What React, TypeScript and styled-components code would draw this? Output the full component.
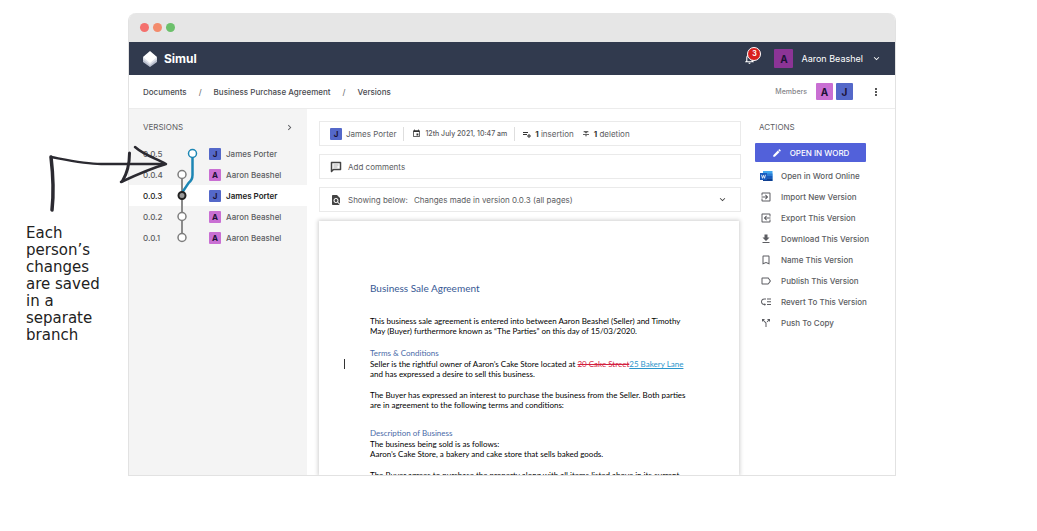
import React from 'react';
import styled, { createGlobalStyle, css } from 'styled-components';
import {
  MdBookmarkBorder,
  MdCallSplit,
  MdChevronRight,
  MdEdit,
  MdEvent,
  MdExitToApp,
  MdExpandMore,
  MdFileDownload,
  MdFindInPage,
  MdFormatStrikethrough,
  MdLabelOutline,
  MdLowPriority,
  MdMoreVert,
  MdNotificationsNone,
} from 'react-icons/md';

const GlobalStyle = createGlobalStyle`
  *, *::before, *::after { box-sizing: border-box; }
  body {
    margin: 0;
    background: #fff;
    color: #5c5d62;
    font-family: Inter, "Open Sans", sans-serif;
    font-size: 8px;
    line-height: 12px;
  }
  button { font: inherit; color: inherit; background: none; border: 0; padding: 0; cursor: pointer; }
  a { color: inherit; text-decoration: none; }
  ul, ol { list-style: none; margin: 0; padding: 0; }
  h1, h2, h3, p { margin: 0; font: inherit; }
  svg { display: block; flex: none; }
`;

const Page = styled.div`
  display: grid;
  grid-template-columns: 128px minmax(0, 1fr);
  height: 100vh;
  padding: 13px 141px 55px 0;
`;

const Note = styled.aside`
  position: relative;
  z-index: 2;
  padding: 212px 10px 0 26px;
  color: #222;
  font-family: "DejaVu Sans", sans-serif;
  font-size: 15px;
  line-height: 17px;
`;

const NoteArrow = styled.svg`
  position: absolute;
  top: 127px;
  left: 40px;
  pointer-events: none;
`;

const Window = styled.div`
  display: flex;
  flex-direction: column;
  min-height: 0;
  border: 1px solid #e2e2e2;
  border-top: 0;
  border-radius: 8px 8px 0 0;
  overflow: hidden;
`;

const TitleBar = styled.div`
  display: flex;
  align-items: center;
  gap: 4px;
  flex: none;
  height: 29px;
  padding-left: 11px;
  background: #e6e6e6;
`;

const Light = styled.span<{ $color: string }>`
  width: 9px;
  height: 9px;
  border-radius: 50%;
  background: ${(p) => p.$color};
`;

const NavBar = styled.header`
  display: flex;
  align-items: center;
  justify-content: space-between;
  flex: none;
  height: 33px;
  padding: 0 13px;
  background: #313a4e;
  color: #fff;
`;

const Brand = styled.a`
  display: flex;
  align-items: center;
  gap: 6px;
  font-size: 12px;
  font-weight: 700;
`;

const Account = styled.div`
  display: flex;
  align-items: center;
`;

const Bell = styled.button`
  position: relative;
  margin-right: 18px;
`;

const BellCount = styled.span`
  position: absolute;
  top: -5px;
  right: -5px;
  width: 14px;
  height: 14px;
  border: 1px solid #fff;
  border-radius: 50%;
  background: #d9201f;
  color: #fff;
  font-size: 7px;
  font-weight: 700;
  text-align: center;
`;

const AccountMenu = styled.button`
  display: flex;
  align-items: center;
  gap: 8px;
  font-size: 9px;
`;

const tones = { plum: '#8c3496', pink: '#c96fd3', blue: '#5468c9' };

const Avatar = styled.span<{ $tone: keyof typeof tones; $size: number }>`
  display: flex;
  align-items: center;
  justify-content: center;
  flex: none;
  width: ${(p) => p.$size}px;
  height: ${(p) => p.$size}px;
  border-radius: 1px;
  background: ${(p) => tones[p.$tone]};
  color: #1c1236;
  font-size: ${(p) => (p.$size > 14 ? 10 : 8)}px;
  font-weight: 700;
`;

const SubBar = styled.div`
  display: flex;
  align-items: center;
  justify-content: space-between;
  flex: none;
  height: 34px;
  padding: 0 13px 0 14px;
  border-bottom: 1px solid #ececec;
`;

const Crumbs = styled.ol`
  display: flex;
  color: #494a4f;
  font-weight: 500;
  li + li::before { content: "/"; margin: 0 12px; color: #777; }
`;

const Members = styled.div`
  display: flex;
  align-items: center;
  gap: 3px;
  color: #85868a;
  font-size: 7px;
  font-weight: 500;
  > :first-child { margin-right: 6px; }
  > button { margin-left: 14px; color: #333; }
`;

const Body = styled.div`
  display: grid;
  grid-template-columns: 178px minmax(0, 1fr) 154px;
  flex: 1;
  min-height: 0;
`;

const Sidebar = styled.nav`
  background: #f4f4f4;
`;

const SidebarHead = styled.div`
  display: flex;
  align-items: center;
  justify-content: space-between;
  height: 34px;
  padding: 2px 12px 0 14px;
`;

const VersionList = styled.div`
  position: relative;
`;

const Graph = styled.svg`
  position: absolute;
  top: 0;
  left: 44px;
  pointer-events: none;
`;

const VersionRow = styled.a<{ $active?: boolean }>`
  display: grid;
  grid-template-columns: 66px 12px 1fr;
  align-items: center;
  height: 21px;
  padding-left: 14px;
  font-weight: 500;
  ${(p) => p.$active && css`
    background: #fff;
    color: #222;
  `}
  strong { padding-left: 5px; font-weight: ${(p) => (p.$active ? 600 : 500)}; }
`;

const Content = styled.main`
  display: flex;
  flex-direction: column;
  gap: 8px;
  min-height: 0;
  padding: 12px 0 0 12px;
`;

const Card = styled.section`
  display: flex;
  align-items: center;
  flex: none;
  height: 25px;
  padding: 0 12px 0 10px;
  border: 1px solid #eaeaea;
`;

const Meta = styled.span<{ $divided?: boolean }>`
  display: flex;
  align-items: center;
  gap: 4px;
  height: 14px;
  white-space: nowrap;
  margin-right: 8px;
  ${(p) => p.$divided && css`
    padding-right: 7px;
    border-right: 1px solid #dedede;
  `}
  b { color: #333; }
  time { font-size: 7px; font-weight: 500; }
  svg { color: #333; }
`;

const CardButton = styled.button`
  display: flex;
  align-items: center;
  gap: 6px;
  flex: 1;
  text-align: left;
  svg { color: #444; }
  > span + svg { margin-left: auto; }
`;

const Paper = styled.article`
  flex: 1;
  min-height: 0;
  margin: 1px 2px 0 0;
  padding: 60px 50px 0 51px;
  overflow: hidden;
  box-shadow: 0 0 4px 1px #d0d0d0;
  color: #000;
  font-family: Lato, sans-serif;
  font-size: 8px;
  line-height: 10px;
`;

const DocTitle = styled.h1`
  color: #365894;
  font-size: 10px;
  line-height: 14px;
  margin-bottom: 21px;
`;

const DocHeading = styled.h2`
  color: #4a6ba8;
  line-height: 12px;
`;

const Paragraph = styled.p<{ $gap?: number }>`
  margin-bottom: ${(p) => p.$gap ?? 11}px;
  white-space: nowrap;
  del { color: #d3203f; }
  ins { color: #2b95cc; }
`;

const EditedParagraph = styled(Paragraph)`
  position: relative;
  &::before {
    content: "";
    position: absolute;
    top: 0;
    left: -26px;
    width: 1px;
    height: 10px;
    background: #333;
  }
`;

const Actions = styled.aside`
  padding: 12px 29px 0 14px;
`;

const ActionsTitle = styled.h2`
  padding-left: 4px;
  margin-bottom: 10px;
`;

const Primary = styled.button`
  display: flex;
  align-items: center;
  justify-content: center;
  gap: 8px;
  width: 100%;
  height: 19px;
  margin-bottom: 3px;
  border-radius: 1px;
  background: #5261da;
  color: #fff;
  font-weight: 500;
`;

const Action = styled.button`
  display: grid;
  grid-template-columns: 12px auto;
  column-gap: 9px;
  align-items: center;
  justify-items: start;
  height: 21px;
  padding-left: 5px;
  white-space: nowrap;
  font-weight: 500;
`;

const Flipped = styled(MdExitToApp)`
  transform: scaleX(-1);
`;

const Logo = () => (
  <svg width="16" height="18" viewBox="0 0 16 18">
    <path d="M1 9 8 4l7 5v3l-7 5-7-5z" fill="#b9bfce" />
    <path d="M1 7.500 8 2l7 5.500v2L8 15 1 9.500z" fill="#dfe2ea" />
    <path d="M8 1l7 6-7 6-7-6z" fill="#fff" />
  </svg>
);

const WordIcon = () => (
  <svg width="13" height="12" viewBox="0 0 13 12">
    <path d="M3 1h9.500v10H3z" fill="#41a5ee" />
    <path d="M3 3.500h9.500V6H3z" fill="#2b7cd3" />
    <path d="M3 6h9.500v2.500H3z" fill="#185abd" />
    <path d="M3 8.500h9.500V11H3z" fill="#103f91" />
    <path d="M0 3h7v7H0z" fill="#185abd" />
    <path d="M1.500 4.800l1 3.500 1-3 1 3 1-3.500" fill="none" stroke="#fff" strokeWidth=".8" />
  </svg>
);

const CommentIcon = () => (
  <svg width="12" height="12" viewBox="0 0 12 12" fill="none" stroke="#444" strokeWidth="1.500">
    <path d="M1.500 10.500V1.500h9v7h-7z" strokeLinejoin="round" />
    <path d="M3.500 4h5M3.500 6h4" stroke="#999" strokeWidth=".8" />
  </svg>
);

const InsertIcon = () => (
  <svg width="8" height="8" viewBox="0 0 8 8" fill="none" stroke="currentColor">
    <path d="M0 2.500h5M0 4.500h4M4 6h4M6 4v4" />
  </svg>
);

const versions = [
  { id: '0.0.5', name: 'James Porter', tone: 'blue' },
  { id: '0.0.4', name: 'Aaron Beashel', tone: 'pink' },
  { id: '0.0.3', name: 'James Porter', tone: 'blue', active: true },
  { id: '0.0.2', name: 'Aaron Beashel', tone: 'pink' },
  { id: '0.0.1', name: 'Aaron Beashel', tone: 'pink' },
] as const;

const actions = [
  { label: 'Open in Word Online', icon: <WordIcon /> },
  { label: 'Import New Version', icon: <MdExitToApp size={12} /> },
  { label: 'Export This Version', icon: <Flipped size={12} /> },
  { label: 'Download This Version', icon: <MdFileDownload size={12} /> },
  { label: 'Name This Version', icon: <MdBookmarkBorder size={12} /> },
  { label: 'Publish This Version', icon: <MdLabelOutline size={12} /> },
  { label: 'Revert To This Version', icon: <MdLowPriority size={12} /> },
  { label: 'Push To Copy', icon: <MdCallSplit size={12} /> },
];

export default function App() {
  return (
    <>
      <GlobalStyle />
      <Page>
        <Note>
          <NoteArrow width="130" height="76" viewBox="0 0 130 76" fill="none" stroke="#2b2a31" strokeWidth="3" strokeLinecap="round" strokeLinejoin="round">
            <path d="M11 17c16 3 34 7 50 7L124 24" strokeWidth="2.500" />
            <path d="M11 17C13 34 14 52 12 70" strokeWidth="3.500" />
            <path d="M89.500 13c0 10-1 18-7 28" />
            <path d="M95 7c9 8 20 11 31 17-17 5-30 11-45 18" strokeWidth="2.500" />
          </NoteArrow>
          Each<br />person’s<br />changes<br />are saved<br />in a<br />separate<br />branch
        </Note>
        <Window>
          <TitleBar>
            <Light $color="#f4706d" />
            <Light $color="#f38b6c" />
            <Light $color="#6cc06b" />
          </TitleBar>
          <NavBar>
            <Brand href="#"><Logo />Simul</Brand>
            <Account>
              <Bell aria-label="Notifications">
                <MdNotificationsNone size={13} />
                <BellCount>3</BellCount>
              </Bell>
              <AccountMenu>
                <Avatar $tone="plum" $size={19}>A</Avatar>
                Aaron Beashel
                <MdExpandMore size={11} />
              </AccountMenu>
            </Account>
          </NavBar>
          <SubBar>
            <Crumbs>
              <li><a href="#">Documents</a></li>
              <li><a href="#">Business Purchase Agreement</a></li>
              <li><a href="#">Versions</a></li>
            </Crumbs>
            <Members>
              <span>Members</span>
              <Avatar $tone="pink" $size={17}>A</Avatar>
              <Avatar $tone="blue" $size={17}>J</Avatar>
              <button aria-label="More"><MdMoreVert size={12} /></button>
            </Members>
          </SubBar>
          <Body>
            <Sidebar>
              <SidebarHead>
                <h2>VERSIONS</h2>
                <button aria-label="Collapse versions"><MdChevronRight size={11} /></button>
              </SidebarHead>
              <VersionList>
                {versions.map((v) => (
                  <VersionRow key={v.id} href="#" $active={'active' in v}>
                    <span>{v.id}</span>
                    <Avatar $tone={v.tone} $size={12}>{v.name[0]}</Avatar>
                    <strong>{v.name}</strong>
                  </VersionRow>
                ))}
                <Graph width="28" height="105" viewBox="0 0 28 105" fill="#fff" strokeWidth="1.500">
                  <path d="M9 31v64" stroke="#8b8b8b" strokeWidth="2" />
                  <path d="M19.500 11v21q0 5-4 8l-6 9" fill="none" stroke="#1c86b4" strokeWidth="2.500" />
                  <circle cx="19.500" cy="10.500" r="4" stroke="#1c86b4" />
                  <circle cx="9" cy="31.500" r="4" stroke="#7d7d7d" />
                  <circle cx="9" cy="52.500" r="3.500" fill="#999" stroke="#222" strokeWidth="2" />
                  <circle cx="9" cy="73.500" r="4" stroke="#7d7d7d" />
                  <circle cx="9" cy="94.500" r="4" stroke="#7d7d7d" />
                </Graph>
              </VersionList>
            </Sidebar>
            <Content>
              <Card>
                <Meta $divided><Avatar $tone="blue" $size={12}>J</Avatar>James Porter</Meta>
                <Meta $divided><MdEvent size={9} /><time>12th July 2021, 10:47 am</time></Meta>
                <Meta><InsertIcon /><span><b>1</b> insertion</span></Meta>
                <Meta><MdFormatStrikethrough size={8} /><span><b>1</b> deletion</span></Meta>
              </Card>
              <Card><CardButton><CommentIcon /><span>Add comments</span></CardButton></Card>
              <Card>
                <CardButton>
                  <MdFindInPage size={12} />
                  <span>Showing below:</span>
                  <span>Changes made in version 0.0.3 (all pages)</span>
                  <MdExpandMore size={11} />
                </CardButton>
              </Card>
              <Paper>
                <DocTitle>Business Sale Agreement</DocTitle>
                <Paragraph>
                  This business sale agreement is entered into between Aaron Beashel (Seller) and Timothy<br />
                  May (Buyer) furthermore known as “The Parties” on this day of 15/03/2020.
                </Paragraph>
                <DocHeading>Terms &amp; Conditions</DocHeading>
                <EditedParagraph>
                  Seller is the rightful owner of Aaron’s Cake Store located at <del>20 Cake Street</del><ins>25 Bakery Lane</ins><br />
                  and has expressed a desire to sell this business.
                </EditedParagraph>
                <Paragraph $gap={17}>
                  The Buyer has expressed an interest to purchase the business from the Seller. Both parties<br />
                  are in agreement to the following terms and conditions:
                </Paragraph>
                <DocHeading>Description of Business</DocHeading>
                <Paragraph>
                  The business being sold is as follows:<br />
                  Aaron’s Cake Store, a bakery and cake store that sells baked goods.
                </Paragraph>
                <Paragraph>The Buyer agrees to purchase the property along with all items listed above in its current</Paragraph>
              </Paper>
            </Content>
            <Actions>
              <ActionsTitle>ACTIONS</ActionsTitle>
              <Primary><MdEdit size={10} />OPEN IN WORD</Primary>
              <ul>
                {actions.map((a) => (
                  <li key={a.label}><Action>{a.icon}{a.label}</Action></li>
                ))}
              </ul>
            </Actions>
          </Body>
        </Window>
      </Page>
    </>
  );
}
